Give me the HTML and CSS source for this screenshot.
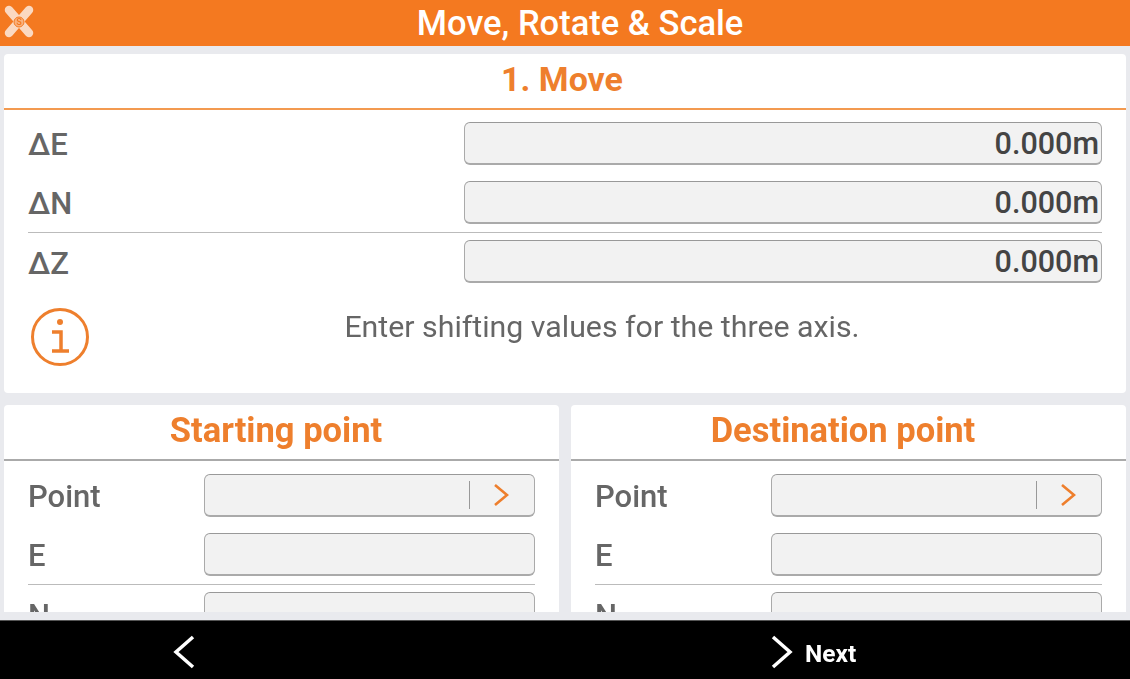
FILE: index.html
```html
<!DOCTYPE html>
<html lang="en">
<head>
  <meta charset="UTF-8">
  <meta name="viewport" content="width=device-width, initial-scale=1.0">
  <title>Move, Rotate &amp; Scale</title>
  <link rel="stylesheet" href="styles.css">
</head>
<body>

  <div class="header">
    <svg class="logo" width="38" height="42" viewBox="0 0 38 42">
      <g stroke="#fff" stroke-width="8.5" stroke-linecap="round" opacity="0.72">
        <path d="M9 10 L29 33"/>
        <path d="M29 10 L9 33"/>
      </g>
      <circle cx="19" cy="22" r="5" fill="#f9b27e" stroke="#f47920"/>
      <text class="logo-s" x="19" y="25" text-anchor="middle">S</text>
    </svg>
    <h1>Move, Rotate &amp; Scale</h1>
  </div>

  <div class="content">
    <div class="panel">
      <h2 class="panel-title title-accent">1. Move</h2>
      <div class="rows">
        <div class="row row-wide">
          <label>ΔE</label>
          <div class="field">0.000m</div>
        </div>
        <div class="row row-wide">
          <label>ΔN</label>
          <div class="field">0.000m</div>
        </div>
        <div class="row row-wide row-line">
          <label>ΔZ</label>
          <div class="field">0.000m</div>
        </div>
      </div>
      <div class="info">
        <svg class="info-icon" width="60" height="60" viewBox="0 0 60 60">
          <circle cx="30" cy="30" r="27.5" fill="none" stroke="#ee7f2d" stroke-width="3"/>
          <circle cx="30" cy="15" r="3" fill="#ee7f2d"/>
          <path d="M22 25 H31 V44 M22 44 H39" fill="none" stroke="#ee7f2d" stroke-width="3.5"/>
        </svg>
        <p>Enter shifting values for the three axis.</p>
      </div>
    </div>

    <div class="columns">
      <div class="card">
        <h2 class="panel-title">Starting point</h2>
        <div class="rows">
          <div class="row">
            <label>Point</label>
            <div class="field field-pick">
              <span class="pick">
                <svg width="16" height="24" viewBox="0 0 16 24"><path d="M2 2 L14 12 L2 22" fill="none" stroke="#ee7f2d" stroke-width="2.6"/></svg>
              </span>
            </div>
          </div>
          <div class="row">
            <label>E</label>
            <div class="field"></div>
          </div>
          <div class="row row-line">
            <label>N</label>
            <div class="field"></div>
          </div>
        </div>
      </div>
      <div class="card">
        <h2 class="panel-title">Destination point</h2>
        <div class="rows">
          <div class="row">
            <label>Point</label>
            <div class="field field-pick">
              <span class="pick">
                <svg width="16" height="24" viewBox="0 0 16 24"><path d="M2 2 L14 12 L2 22" fill="none" stroke="#ee7f2d" stroke-width="2.6"/></svg>
              </span>
            </div>
          </div>
          <div class="row">
            <label>E</label>
            <div class="field"></div>
          </div>
          <div class="row row-line">
            <label>N</label>
            <div class="field"></div>
          </div>
        </div>
      </div>
    </div>
  </div>

  <div class="footer">
    <a class="foot-btn" href="#">
      <svg width="22" height="34" viewBox="0 0 22 34"><path d="M20 2 L3 17 L20 32" fill="none" stroke="#fff" stroke-width="3.5"/></svg>
    </a>
    <a class="foot-btn" href="#">
      <svg width="22" height="34" viewBox="0 0 22 34"><path d="M2 2 L19 17 L2 32" fill="none" stroke="#fff" stroke-width="3.5"/></svg>
      <span class="next">Next</span>
    </a>
  </div>

</body>
</html>
```

FILE: styles.css
```css
* {
  box-sizing: border-box;
}
body {
  font-family: Roboto, "Liberation Sans", sans-serif;
  margin: 0;
  padding: 0;
  height: 679px;
  overflow: hidden;
  display: flex;
  flex-direction: column;
  background-color: #e9eaee;
  color: #666;
  filter: blur(0.5px);
}
.header {
  position: relative;
  height: 46px;
  flex: none;
  background-color: #f47920;
  display: flex;
  justify-content: center;
  align-items: center;
  padding-left: 30px;
}
.header h1 {
  font-size: 34.5px;
  font-weight: 500;
  color: #fff;
  margin: 0;
}
.logo {
  position: absolute;
  left: 0;
  top: 0;
}
.logo-s {
  font-size: 9px;
  font-weight: 500;
  fill: #f47920;
}
.content {
  flex: 1;
  min-height: 0;
  padding: 8px 4px;
  display: flex;
  flex-direction: column;
  gap: 12px;
  overflow: hidden;
}
.panel {
  height: 339px;
  flex: none;
  background: #fff;
  border-radius: 4px;
}
.panel-title {
  height: 56px;
  margin: 0;
  padding-right: 11px;
  font-size: 34.5px;
  font-weight: 700;
  line-height: 51px;
  text-align: center;
  color: #ee7f2d;
  border-bottom: 2px solid #aaa;
}
.title-accent {
  border-bottom-color: #f39a50;
  padding-right: 6px;
  font-size: 34px;
  line-height: 50px;
}
.rows {
  padding: 5px 24px 0;
}
.panel .rows {
  padding-top: 4px;
}
.row {
  height: 59px;
  padding: 8px 0;
  display: grid;
  grid-template-columns: 176px 1fr;
  align-items: center;
}
.row-wide {
  grid-template-columns: 436px 1fr;
}
.row-line {
  border-top: 1px solid #bbb;
  padding-top: 7px;
}
.row label {
  padding-top: 2px;
  font-size: 31px;
  font-weight: 500;
  color: #666;
}
.row-line label {
  padding-top: 4px;
}
.field {
  height: 43px;
  background: #f2f2f2;
  border: 1px solid #aaa;
  border-top-color: #999;
  border-bottom-width: 2px;
  border-radius: 6px;
  padding-right: 2px;
  font-size: 30.5px;
  font-weight: 500;
  line-height: 42px;
  text-align: right;
  color: #444;
}
.field-pick {
  display: flex;
  justify-content: flex-end;
  align-items: center;
}
.pick {
  width: 63px;
  height: 28px;
  border-left: 1px solid #999;
  display: flex;
  justify-content: center;
  align-items: center;
  padding-left: 0;
}
.info {
  display: flex;
  align-items: flex-start;
  padding: 16px 24px 0 26px;
}
.info-icon {
  flex: none;
}
.info p {
  flex: 1;
  margin: 2px 0 0;
  padding-left: 12px;
  font-size: 30.3px;
  line-height: 36px;
  text-align: center;
  color: #666;
}
.columns {
  flex: 1;
  min-height: 0;
  display: grid;
  grid-template-columns: 1fr 1fr;
  gap: 12px;
}
.card {
  background: #fff;
  border-radius: 4px 4px 0 0;
  overflow: hidden;
}
.footer {
  height: 59px;
  flex: none;
  background: #000;
  border-top: 1px solid #555;
  display: grid;
  grid-template-columns: 345px 1fr;
  color: #fff;
  padding-top: 4px;
}
.foot-btn {
  display: flex;
  align-items: center;
  justify-content: flex-end;
  gap: 12px;
  text-decoration: none;
  color: #fff;
  font-size: 24.5px;
  font-weight: 700;
}
.next {
  padding-top: 2px;
}
.foot-btn:last-child {
  justify-content: flex-start;
  padding-left: 426px;
}
.foot-btn:first-child {
  padding-right: 150px;
}
```
